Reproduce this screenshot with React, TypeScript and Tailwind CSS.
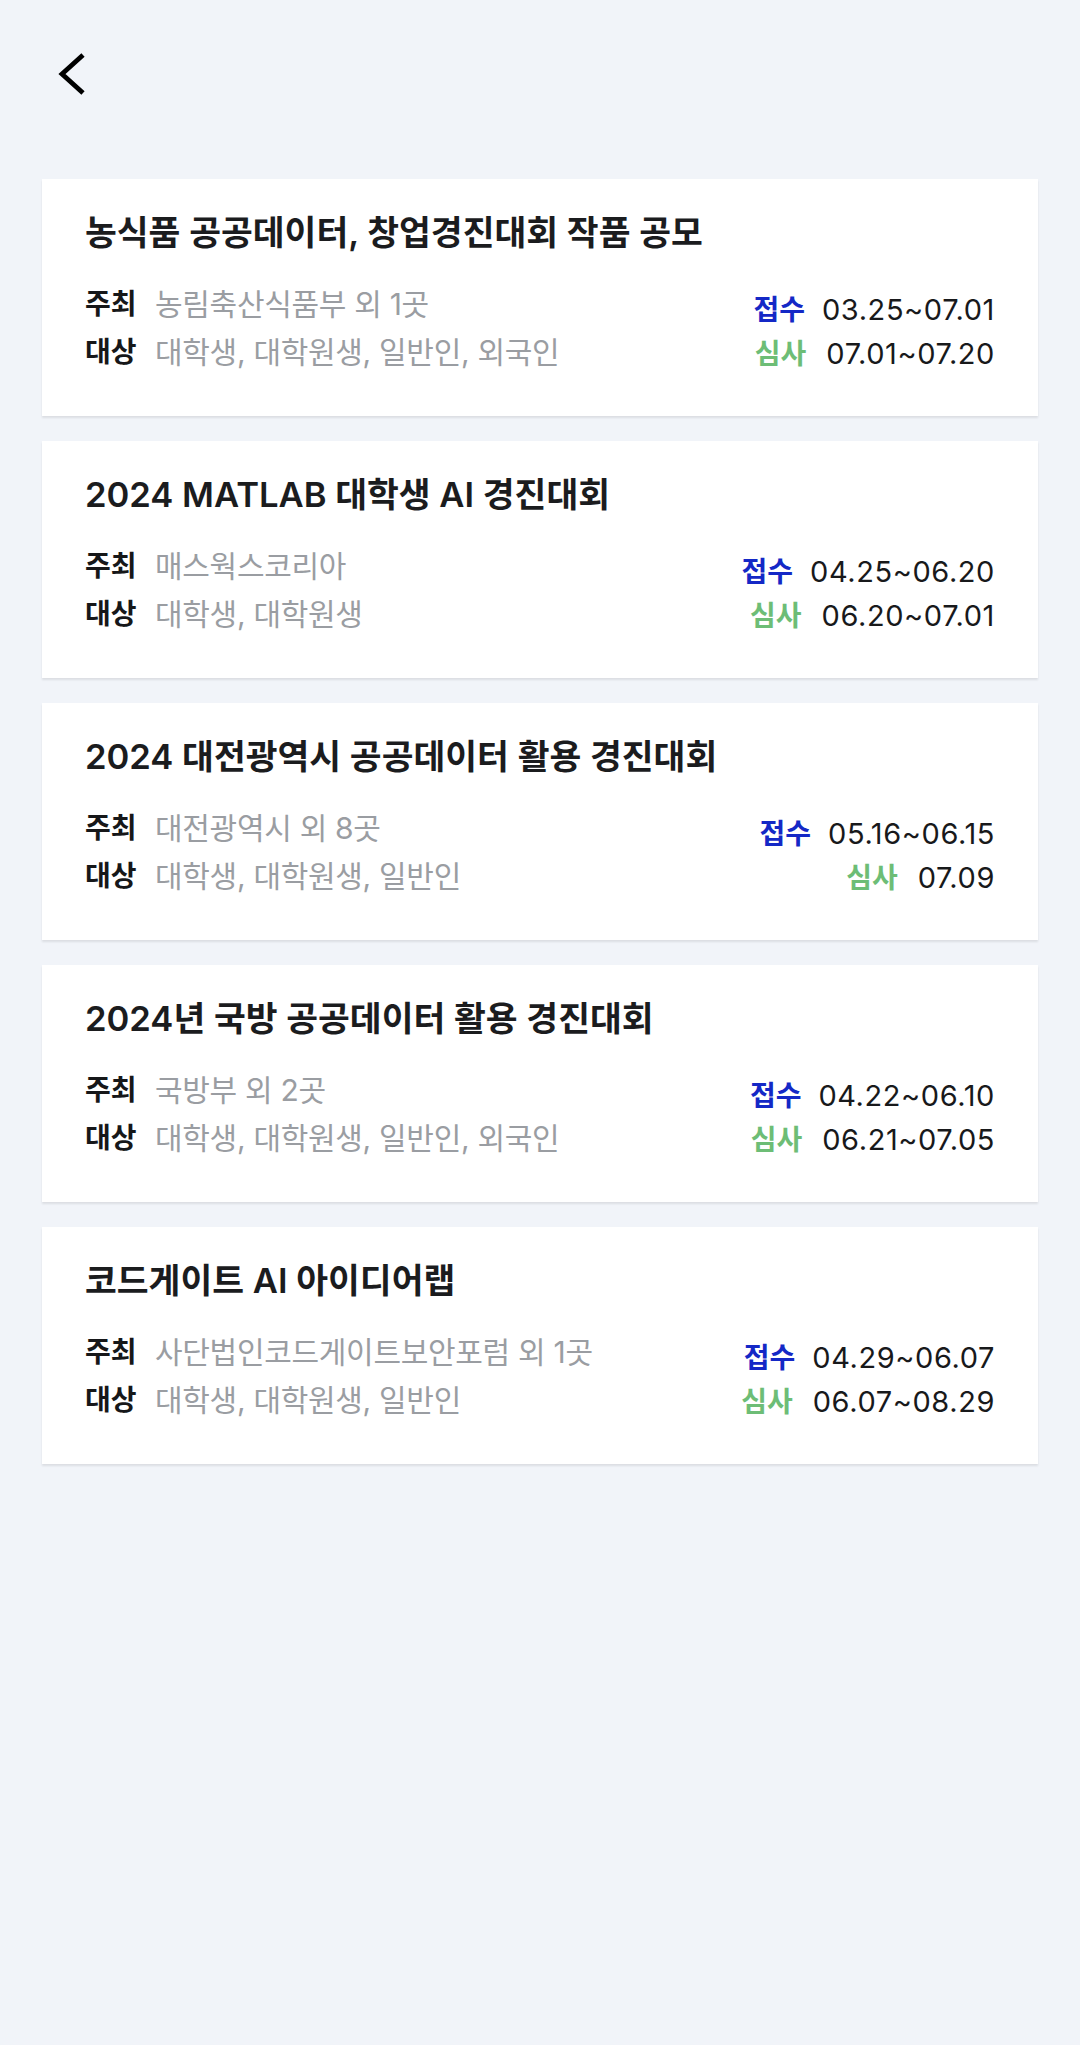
import React from "react";

type Item = {
  title: string;
  host: string;
  target: string;
  apply: string;
  review: string;
};

const items: Item[] = [
  {
    title: "농식품 공공데이터, 창업경진대회 작품 공모",
    host: "농림축산식품부 외 1곳",
    target: "대학생, 대학원생, 일반인, 외국인",
    apply: "03.25~07.01",
    review: "07.01~07.20",
  },
  {
    title: "2024 MATLAB 대학생 AI 경진대회",
    host: "매스웍스코리아",
    target: "대학생, 대학원생",
    apply: "04.25~06.20",
    review: "06.20~07.01",
  },
  {
    title: "2024 대전광역시 공공데이터 활용 경진대회",
    host: "대전광역시 외 8곳",
    target: "대학생, 대학원생, 일반인",
    apply: "05.16~06.15",
    review: "07.09",
  },
  {
    title: "2024년 국방 공공데이터 활용 경진대회",
    host: "국방부 외 2곳",
    target: "대학생, 대학원생, 일반인, 외국인",
    apply: "04.22~06.10",
    review: "06.21~07.05",
  },
  {
    title: "코드게이트 AI 아이디어랩",
    host: "사단법인코드게이트보안포럼 외 1곳",
    target: "대학생, 대학원생, 일반인",
    apply: "04.29~06.07",
    review: "06.07~08.29",
  },
];

const font = {
  fontFamily: '"Inter", "Noto Sans CJK KR", sans-serif',
};

function Card({ item }: { item: Item }) {
  return (
    <div className="bg-white shadow-[0_2px_2px_rgba(0,0,0,0.09)] pl-[43px] pr-[43px] pt-[33px] pb-[40px]">
      <div className="text-[34.6px] leading-[40px] font-semibold text-[#1b1c1e]">
        {item.title}
      </div>
      <div className="mt-[28px] flex justify-between items-end">
        <div className="flex flex-col">
          <div className="flex items-center h-[48px]">
            <span className="text-[28px] font-bold text-[#161719] w-[51px] whitespace-nowrap">주최</span>
            <span className="ml-[19px] text-[30px] text-[#9a9da2] tracking-[-0.01em]">{item.host}</span>
          </div>
          <div className="flex items-center h-[48px]">
            <span className="text-[28px] font-bold text-[#161719] w-[51px] whitespace-nowrap">대상</span>
            <span className="ml-[19px] text-[30px] text-[#9a9da2] tracking-[-0.01em]">{item.target}</span>
          </div>
        </div>
        <div className="flex flex-col items-end">
          <div className="flex items-center h-[44px]">
            <span className="text-[28px] font-bold text-[#1428c6]">접수</span>
            <span className="ml-[17px] text-[29px] tracking-[0.02em] text-[#18191b]">{item.apply}</span>
          </div>
          <div className="flex items-center h-[44px]">
            <span className="text-[28px] font-bold text-[#6dbd76]">심사</span>
            <span className="ml-[20px] text-[29px] tracking-[0.02em] text-[#18191b]">{item.review}</span>
          </div>
        </div>
      </div>
    </div>
  );
}

export default function App() {
  return (
    <div className="min-h-[2045px] w-full bg-[#f1f4f9]" style={font}>
      <div className="h-[179px] pl-[56px] pt-[52px]">
        <button className="block w-[36px] h-[44px]">
          <svg width="36" height="44" viewBox="0 0 36 44" fill="none">
            <polyline
              points="27,3 6,22 27,41"
              stroke="#000"
              strokeWidth="4.8"
              strokeLinecap="butt"
              strokeLinejoin="miter"
              fill="none"
            />
          </svg>
        </button>
      </div>
      <div className="px-[42px] flex flex-col gap-[25px]">
        {items.map((it) => (
          <Card key={it.title} item={it} />
        ))}
      </div>
    </div>
  );
}
